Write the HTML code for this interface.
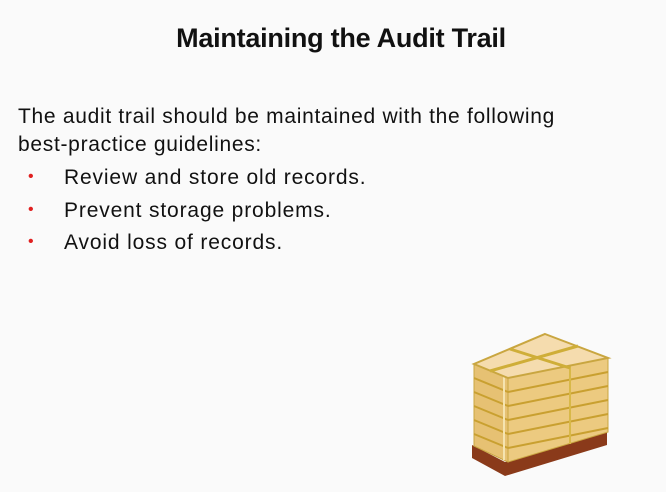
<!DOCTYPE html>
<html><head><style>
body{margin:0;width:666px;height:492px;background:#fafafa;overflow:hidden;position:relative;font-family:"Liberation Sans",Arial,sans-serif;color:#111}
h1{position:absolute;top:21px;left:0;width:682px;text-align:center;margin:0;font-size:27px;font-weight:bold;letter-spacing:-0.25px;line-height:34px}
.p{position:absolute;left:18px;font-size:21px;letter-spacing:0.7px;line-height:26px}
.b{position:absolute;left:28px;color:#e02020;font-size:16px}
.t{position:absolute;left:64px;font-size:21px;letter-spacing:0.85px;line-height:26px}
</style></head><body>
<h1>Maintaining the Audit Trail</h1>
<div class="p" style="top:104px">The audit trail should be maintained with the following</div>
<div class="p" style="top:132px">best-practice guidelines:</div>
<div class="b" style="top:168px">•</div><div class="t" style="top:165px">Review and store old records.</div>
<div class="b" style="top:201px">•</div><div class="t" style="top:198px">Prevent storage problems.</div>
<div class="b" style="top:233px">•</div><div class="t" style="top:230px">Avoid loss of records.</div>
<svg style="position:absolute;left:0;top:0" width="666" height="492">
<polygon points="472,445 505,462 607,432 607,445 505,476 472,458" fill="#8a3a1a"/>
<polygon points="474,364 508,378 508,462 474,446" fill="#e6c173" stroke="#c9a640"/>
<polygon points="508,378 608,358 608,432 508,462" fill="#ecca80" stroke="#c9a640"/>
<g stroke="#c9a030" stroke-width="2">
<line x1="474" y1="378" x2="508" y2="392"/><line x1="474" y1="392" x2="508" y2="406"/><line x1="474" y1="406" x2="508" y2="420"/><line x1="474" y1="420" x2="508" y2="434"/><line x1="474" y1="434" x2="508" y2="448"/>
<line x1="508" y1="392" x2="608" y2="372"/><line x1="508" y1="406" x2="608" y2="386"/><line x1="508" y1="420" x2="608" y2="400"/><line x1="508" y1="434" x2="608" y2="414"/><line x1="508" y1="448" x2="608" y2="428"/>
<line x1="504" y1="377" x2="504" y2="460" stroke="#f5e4b0"/><line x1="570" y1="366" x2="570" y2="444" stroke="#d8b848"/>
</g>
<polygon points="545,334 608,358 508,378 474,364" fill="#f5dcae" stroke="#c9a640" stroke-width="2"/>
<line x1="510" y1="349" x2="570" y2="368" stroke="#cfae38" stroke-width="3"/>
<line x1="578" y1="346" x2="490" y2="371" stroke="#cfae38" stroke-width="3"/>
</svg>
</body></html>
